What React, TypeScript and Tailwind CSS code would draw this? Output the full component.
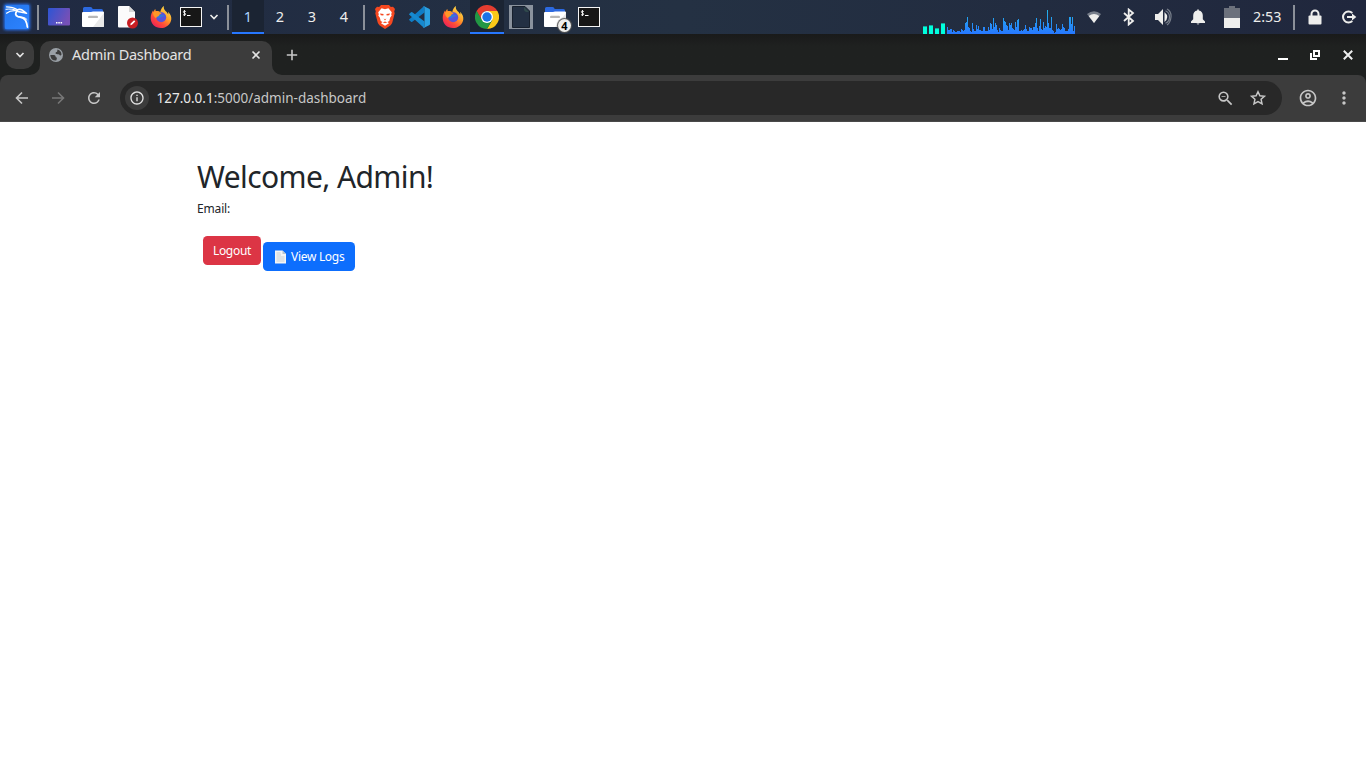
import type { ReactNode } from 'react';
import { MdInfoOutline, MdMoreVert, MdOutlineAccountCircle, MdRefresh, MdZoomOut } from 'react-icons/md';

const traffic = [
  7, 4, 4, 5, 5, 2, 4, 3, 2, 2, 3, 3, 3, 2, 5, 4, 3, 4, 11, 12, 17, 7, 6, 3, 2, 11, 5, 3, 3, 9, 5, 8,
  4, 4, 3, 3, 7, 7, 3, 3, 3, 7, 4, 11, 10, 5, 16, 7, 11, 9, 4, 2, 6, 4, 3, 3, 16, 13, 12, 9, 8, 4, 11,
  9, 11, 6, 5, 4, 12, 7, 14, 15, 3, 3, 4, 3, 4, 5, 9, 5, 3, 3, 7, 6, 6, 4, 7, 7, 11, 16, 6, 3, 8, 15, 5,
  4, 12, 6, 8, 7, 24, 11, 6, 6, 17, 4, 3, 1, 2, 10, 5, 6, 5, 4, 5, 10, 7, 6, 3, 3, 3, 5, 17, 17, 10, 17,
  3, 8,
];

function Slot({ children, active = false }: { children: ReactNode; active?: boolean }) {
  return (
    <div
      className={
        active
          ? 'flex h-[34px] w-[34px] items-center justify-center border-b-2 border-[#2777ff] bg-[#1b2433] pt-[2px]'
          : 'flex h-[34px] w-[34px] items-center justify-center'
      }
    >
      {children}
    </div>
  );
}

function Separator() {
  return <div className="h-[25px] w-[2px] bg-[#8b9099]" />;
}

function KaliIcon() {
  return (
    <svg width="34" height="34" viewBox="0 0 34 34">
      <defs>
        <linearGradient id="kali" x1="0" y1="0" x2="1" y2="1">
          <stop offset="0" stopColor="#2376ed" />
          <stop offset="1" stopColor="#2d83ff" />
        </linearGradient>
        <filter id="glow" x="-30%" y="-30%" width="160%" height="160%">
          <feGaussianBlur stdDeviation="1.600" />
        </filter>
      </defs>
      <rect x="4" y="4" width="26" height="26" rx="2" fill="#2777ff" filter="url(#glow)" />
      <rect x="5" y="5" width="24" height="24" rx="1" fill="url(#kali)" />
      <g fill="none" stroke="#fff" strokeLinecap="round" strokeLinejoin="round">
        <path d="M6.500 6.800c4.500 0 8 .9 11 3" strokeWidth="1.200" />
        <path d="M6 9.300c4-.6 8-.2 11.500 1.400" strokeWidth="1" />
        <path d="M6.500 13.200c2.600-2 6.500-3 10.500-2.400" strokeWidth="1.200" />
        <path d="M17 10c2.200-1 4.600-.7 6.300.8l3.200 2.500-3.200-.8c-1.600-.3-3-.9-4.700-.8" strokeWidth="1.600" />
        <path d="M17.200 11c-2.300 2-2.100 4.600.8 5.600 3.400.9 5.900 1.100 7.500 3.800 1 1.900 1.600 4 1.900 6.600" strokeWidth="1.800" />
        <path d="M20 17c3-.2 5.500.8 7 2.500" strokeWidth="1" />
      </g>
    </svg>
  );
}

function DesktopIcon() {
  return (
    <svg width="22" height="18" viewBox="0 0 22 18">
      <defs>
        <linearGradient id="desk" x1="0" y1="0" x2="1" y2="0.4">
          <stop offset="0" stopColor="#2c55d5" />
          <stop offset="1" stopColor="#7650b6" />
        </linearGradient>
      </defs>
      <rect width="22" height="17.500" rx="1" fill="url(#desk)" />
      <path d="M8 14h1.500v1.500H8zM10.300 14h1.500v1.500h-1.500zM12.600 14h1.500v1.500h-1.500z" fill="#fff" />
    </svg>
  );
}

function FolderIcon() {
  return (
    <svg width="22" height="20" viewBox="0 0 22 20">
      <path d="M1 1.500Q1 0 2.500 0H8.500q1 0 1.500.8l.7 1.100H19.500Q21 1.900 21 3.500V8H1z" fill="#2c69df" />
      <path d="M0 6q0-1 1-1h8l2-.6H21q1 0 1 1V19q0 1-1 1H1q-1 0-1-1z" fill="#fff" />
      <path d="M22 6V19q0 1-1 1H11z" fill="#e9e9e9" />
      <rect x="6" y="8.700" width="10" height="2.400" rx="1.200" fill="#b7b7b7" />
    </svg>
  );
}

function DocumentIcon() {
  return (
    <svg className="ml-[2px]" width="22" height="23" viewBox="0 0 22 23">
      <path d="M2 0h10l6 6v15.500H2q-1 0-1-1V1q0-1 1-1z" fill="#fbfbfb" />
      <path d="M12 0l6 6h-6z" fill="#d7d7d7" />
      <circle cx="15.500" cy="17" r="5.500" fill="#c81e23" />
      <path d="M13.300 19.200l.4-1.600 3.400-3.300 1.200 1.200-3.400 3.300z" fill="#fff" />
    </svg>
  );
}

function FirefoxIcon({ id }: { id: string }) {
  return (
    <svg width="22" height="22" viewBox="0 0 22 22">
      <defs>
        <linearGradient id={id} x1="0.850" y1="0.100" x2="0.200" y2="0.950">
          <stop offset="0" stopColor="#ffe14a" />
          <stop offset="0.400" stopColor="#ff9a28" />
          <stop offset="0.700" stopColor="#ff4b38" />
          <stop offset="1" stopColor="#ec2358" />
        </linearGradient>
      </defs>
      <path
        d="M14 0c-.7 2.300.2 3.600 1.700 5.200 1.400 1.200 2 2.200 2.500 3.400.2-1 .1-2-.2-2.900 2.300 2.200 3.600 4.700 3.300 7.500C20.800 18.300 16.400 22 11 22 5.100 22 .7 17.900.7 12c0-3 1.100-5.500 2.300-7.400l.5 1.500C4 4.600 4.600 3.700 5.300 3l.4 2.100c1.800-.5 3.300-.1 4.600.8C10.800 3.300 12 1.200 14 0z"
        fill={`url(#${id})`}
      />
      <circle cx="11.200" cy="11.200" r="5" fill="#5a52d8" />
      <path d="M6.100 11c.4-3 2.700-4.500 5.200-4.200-.3.800-.9 1.400-1.600 1.700 2.900.1 4.500.5 5.500 2-1.400-.7-2.500-.2-3.600.5-1.800 1.500-3.800 1.500-5.500 0z" fill="#3477dc" />
      <path d="M3 6.500c2.300-1.400 5.200-1.200 7.300.1L11.700 8c-1.400 0-2.300.4-2.400 1-.5 1.600-2.800 1.500-3.300 3.300-1.700-1-3-3-3-5.800z" fill="#ff9726" />
    </svg>
  );
}

function TerminalIcon() {
  return (
    <svg width="22" height="20" viewBox="0 0 22 20">
      <rect x=".5" y=".5" width="21" height="19" fill="#171717" stroke="#f5f5f5" />
      <g fill="none" stroke="#fff">
        <path d="M5.800 4.600C4.200 3.600 3 4.200 3.300 5.200c.3.900 2.300.8 2.400 1.900.1 1-1.600 1.300-2.700.5M4.500 3v6" strokeWidth=".9" />
        <path d="M7 8.500h3.500" />
      </g>
    </svg>
  );
}

function BraveIcon() {
  return (
    <svg width="20" height="24" viewBox="0 0 20 24">
      <path d="M6 0h8l1.800 2 2.200-.3L20 4l-.8 2.400.5 1.900-2.400 9.200q-.5 1.800-2 2.900L10 24l-5.300-3.600q-1.500-1.100-2-2.900L.3 8.300l.5-1.900L0 4l2-2.300 2.200.3z" fill="#f54820" />
      <path d="M10 4.200l3.400-.9 3.400 4-.6 2 .5 1.300-1.600 2.200-.8 3.200-1.800 1L14 18.300l-4 2.500-4-2.500L7.500 17l-1.800-1-.8-3.200-1.600-2.200.5-1.300-.6-2 3.400-4z" fill="#fff" />
      <path d="M5 8.600l3.600.5-.3 1.500-2.500-.4zM15 8.600l-3.600.5.3 1.500 2.500-.4zM8.600 13.600l1.400.6 1.400-.6L10 15.400zM7.700 17.400l2.300-1 2.300 1L10 18z" fill="#f54820" />
    </svg>
  );
}

function CodeIcon() {
  return (
    <svg width="22" height="22" viewBox="0 0 24 24">
      <path d="M1.200 15.400l2.100 1.900q.7.500 1.400 0L18 7V.5q-.9-.2-1.600.5L1.200 14.700q-.4.400 0 .7z" fill="#0f7dc6" />
      <path d="M1.200 8.600l2.100-1.900q.7-.5 1.400 0L18 17v6.500q-.9.200-1.600-.5L1.200 9.300q-.4-.4 0-.7z" fill="#1689cf" />
      <path d="M17.500.4L23 2.900q1 .5 1 1.500v15.200q0 1-1 1.500l-5.500 2.500q-.8.200-1.300-.5 1.800.5 1.800-1.400V2.300q0-1.800-1.800-1.400.5-.7 1.300-.5z" fill="#2a9fe0" />
    </svg>
  );
}

function ChromeIcon() {
  return (
    <svg width="24" height="24" viewBox="0 0 24 24">
      <path d="M12 6h10.400A12 12 0 0 1 12 24l5.200-9z" fill="#fbc918" />
      <path d="M1.600 6A12 12 0 0 0 12 24l5.200-9H6.800z" fill="#229744" />
      <path d="M1.600 6A12 12 0 0 1 22.400 6H12A6 6 0 0 0 6.800 9L6.800 15z" fill="#e43d30" />
      <path d="M1.600 6L6.800 15 8 18 3 18z" fill="#229744" />
      <circle cx="12" cy="12" r="6" fill="#fff" />
      <circle cx="12" cy="12" r="4.700" fill="#1a73e8" />
    </svg>
  );
}

function BlankIcon() {
  return (
    <svg width="24" height="24" viewBox="0 0 24 24">
      <rect width="24" height="24" fill="#8a929d" />
      <path d="M3.500 1.500H16l4.500 4.500v16.500h-17z" fill="#233043" stroke="#17202d" />
      <path d="M15 2l5 5h-2q-3 0-3-3z" fill="#304a4c" />
    </svg>
  );
}

function TrafficGraph() {
  return (
    <svg width="152" height="34" viewBox="0 0 152 34" shapeRendering="crispEdges">
      <defs>
        <linearGradient id="net" gradientUnits="userSpaceOnUse" x1="0" y1="10" x2="0" y2="34">
          <stop offset="0" stopColor="#22b6ea" />
          <stop offset="1" stopColor="#2777ff" />
        </linearGradient>
      </defs>
      <path d="M0 26h4v8H0zM6 25h4v9H6zM12 28h4v6h-4zM18 24h4v10h-4z" fill="#00ffdc" />
      <path d="M0 26h4v1H0zM6 25h4v1H6zM12 28h4v1h-4zM18 23h4v1h-4z" fill="#13a99c" />
      {traffic.map((h, i) => (
        <rect key={i} x={24 + i} y={34 - h} width="1" height={h} fill="url(#net)" />
      ))}
    </svg>
  );
}

function TaskBar() {
  return (
    <header className="flex h-[34px] w-full items-center bg-linear-to-r from-[#202a42] via-[#243143] to-[#20273d] text-[#eeeeec]">
      <div className="w-[37px]">
        <KaliIcon />
      </div>
      <Separator />
      <div className="ml-[3px] flex">
        <Slot><DesktopIcon /></Slot>
        <Slot><FolderIcon /></Slot>
        <Slot><DocumentIcon /></Slot>
        <Slot><FirefoxIcon id="foxMenu" /></Slot>
      </div>
      <div className="ml-[2px] w-[22px]"><TerminalIcon /></div>
      <svg className="ml-[7px]" width="10" height="10" viewBox="0 0 10 10">
        <path d="M1.500 3l3.500 3.500L8.500 3" fill="none" stroke="#eeeeec" strokeWidth="1.600" />
      </svg>
      <div className="ml-[8px] flex w-[5px]"><Separator /></div>
      <nav className="flex font-['Noto_Sans',sans-serif] text-[14.500px] leading-[32px]">
        <span className="h-[34px] w-[32px] border-b-2 border-[#2777ff] bg-[#1b2433] text-center text-[#aed5ff]">1</span>
        <span className="w-[32px] text-center">2</span>
        <span className="w-[32px] text-center">3</span>
        <span className="w-[32px] text-center">4</span>
      </nav>
      <div className="ml-[3px] flex w-[5px]"><Separator /></div>
      <div className="flex">
        <Slot><BraveIcon /></Slot>
        <Slot><CodeIcon /></Slot>
        <Slot><FirefoxIcon id="foxTask" /></Slot>
        <Slot active><ChromeIcon /></Slot>
        <Slot><BlankIcon /></Slot>
        <Slot>
          <span className="relative">
            <FolderIcon />
            <span className="absolute -right-[5px] -bottom-[5px] flex h-[13px] w-[13px] items-center justify-center rounded-full bg-[#eeeeec] font-['Noto_Sans',sans-serif] text-[11px] leading-none font-bold text-black shadow-[0_0_1px_1px_#555]">4</span>
          </span>
        </Slot>
        <Slot><TerminalIcon /></Slot>
      </div>
      <div className="ml-auto flex items-center">
        <TrafficGraph />
        <svg className="ml-[11px]" width="16" height="16" viewBox="0 0 16 16">
          <path d="M1 5Q8-.5 15 5l-7 9z" fill="#777e8a" />
          <path d="M2.700 7Q8 3 13.300 7L8 14z" fill="#eeeeec" />
        </svg>
        <svg className="ml-[18px]" width="18" height="18" viewBox="0 0 18 18">
          <path d="M4 5l9 8-4.300 3.500v-15L13 5l-9 8" fill="none" stroke="#eeeeec" strokeWidth="1.800" />
        </svg>
        <svg className="ml-[16px]" width="18" height="18" viewBox="0 0 18 18">
          <path d="M1 6h3l5-5v16l-5-5H1z" fill="#eeeeec" />
          <path d="M10.500 4q5.500 5 0 10z" fill="#eeeeec" />
          <path d="M11.500 2.700q4 1.800 4 6.300t-4 6.300M13 1Q17.500 3.500 17 9t-4 8" fill="none" stroke="#777e8a" strokeWidth="1.200" />
        </svg>
        <svg className="ml-[18px]" width="16" height="16" viewBox="0 0 16 16">
          <path d="M7.200 1.400V.5h1.600v.9q4 .7 4 5.100v3.700l2.200 2.300V14H1v-1.500l2.200-2.300V6.500q0-4.400 4-5.100zM6.500 14.500h3q-1.500 2-3 0z" fill="#eeeeec" />
        </svg>
        <svg className="ml-[18px]" width="16" height="22" viewBox="0 0 16 22" shapeRendering="crispEdges">
          <path d="M5 0h6v2h5v10H0V2h5z" fill="#6c717c" />
          <path d="M0 12h16v9q0 1-1 1H1q-1 0-1-1z" fill="#eeeeec" />
        </svg>
        <span className="ml-[13px] w-[40px] font-['Noto_Sans',sans-serif] text-[14.300px] leading-5 whitespace-nowrap">2:53</span>
        <Separator />
        <svg className="mr-[2px] ml-[13px]" width="14" height="16" viewBox="0 0 14 16">
          <path d="M3.500 7V5a3.500 3.500 0 0 1 7 0v2" fill="none" stroke="#eeeeec" strokeWidth="2" />
          <rect x=".5" y="6.500" width="13" height="9" rx="1" fill="#eeeeec" />
        </svg>
        <svg className="mr-[9px] ml-[17px]" width="16" height="16" viewBox="0 0 16 16">
          <path d="M11.300 4A5.500 5.500 0 1 0 11.300 12" fill="none" stroke="#eeeeec" strokeWidth="2" />
          <path d="M6 7h5V4.500L15.300 8 11 11.500V9H6z" fill="#eeeeec" />
        </svg>
      </div>
    </header>
  );
}

function TabStrip() {
  return (
    <div className="flex h-[41px] bg-linear-to-b from-[#191a1a] to-[#1f2120] to-30% font-['Noto_Sans',sans-serif]">
      <div className="flex w-[40px] pt-[7px] pl-[6px]">
        <button className="flex h-[28px] w-[28px] items-center justify-center rounded-[10px] bg-[#3c3c3c]">
          <svg width="10" height="8" viewBox="0 0 10 8">
            <path d="M1.500 2L5 5.500 8.500 2" fill="none" stroke="#e3e3e3" strokeWidth="1.700" />
          </svg>
        </button>
      </div>
      <div className="relative mt-[7px] flex h-[34px] w-[232px] items-center rounded-t-[10px] bg-[#3c3c3c] pr-[11px] pb-[6px] pl-[9px]">
        <svg className="absolute bottom-0 -left-[10px]" width="10" height="10" viewBox="0 0 10 10">
          <path d="M10 0A10 10 0 0 1 0 10H10z" fill="#3c3c3c" />
        </svg>
        <svg className="absolute -right-[10px] bottom-0" width="10" height="10" viewBox="0 0 10 10">
          <path d="M0 0A10 10 0 0 0 10 10H0z" fill="#3c3c3c" />
        </svg>
        <svg width="14" height="14" viewBox="0 0 14 14">
          <circle cx="7" cy="7" r="7" fill="#9aa0a6" />
          <path d="M8.500 1.600q4 1.200 4 5.200-.8 1.200-1.700.5-.7-1.300-2-1-1 .2-2.300-.8l.3-1.300 1.300-.5z" fill="#3c3c3c" />
          <path d="M1.300 7h3.900q1.600.4 1.600 2.300l1.200.4-.7 2.900q-5.800.3-6-5.600z" fill="#3c3c3c" />
        </svg>
        <span className="-mt-[2px] ml-[9px] text-[14.500px] leading-5 tracking-[-0.260px] text-[#e3e3e3]">Admin Dashboard</span>
        <svg className="ml-auto" width="10" height="10" viewBox="0 0 10 10">
          <path d="M1.500 1.500l7 7M8.500 1.500l-7 7" stroke="#e3e3e3" strokeWidth="1.600" />
        </svg>
      </div>
      <svg className="mt-[15px] ml-[14px]" width="12" height="12" viewBox="0 0 12 12">
        <path d="M6 .8v10.400M.8 6h10.400" stroke="#c7c7c7" strokeWidth="1.600" />
      </svg>
      <div className="mt-[16px] mr-[13px] ml-auto flex">
        <svg width="10" height="10" viewBox="0 0 10 10"><path d="M0 8h10v2H0z" fill="#fff" /></svg>
        <svg className="ml-[22px]" width="10" height="10" viewBox="0 0 10 10">
          <path d="M4 1h5v5H4zM1 3v6h6" fill="none" stroke="#fff" strokeWidth="2" />
        </svg>
        <svg className="ml-[23px]" width="10" height="10" viewBox="0 0 10 10"><path d="M.8.8l8.400 8.400M9.200.8L.8 9.200" stroke="#eee" strokeWidth="2" /></svg>
      </div>
    </div>
  );
}

function AddressBar() {
  return (
    <div className="bg-[#1f2120]">
      <div className="flex h-[47px] items-center rounded-t-[8px] border-b border-[#4a4a4a] bg-[#3c3c3c] pr-[14px] pl-[14px] font-['Noto_Sans',sans-serif] text-[#c7c7c7]">
        <svg width="16" height="16" viewBox="0 0 16 16">
          <path d="M14 8H3M8 2.500L2.500 8 8 13.500" fill="none" stroke="#c7c7c7" strokeWidth="1.600" />
        </svg>
        <svg className="ml-[20px]" width="16" height="16" viewBox="0 0 16 16">
          <path d="M2 8h11M8 2.500L13.500 8 8 13.500" fill="none" stroke="#777" strokeWidth="1.600" />
        </svg>
        <MdRefresh className="ml-[19px] h-[18px] w-[18px]" />
        <div className="ml-[17px] flex h-[34px] w-[1162px] items-center rounded-full bg-[#282828] pr-[15px] pl-[5px]">
          <div className="flex h-[24px] w-[24px] items-center justify-center rounded-full bg-[#3c3c3c]">
            <MdInfoOutline className="h-[16px] w-[16px] text-[#e3e3e3]" />
          </div>
          <span className="ml-[7.500px] text-[13.500px] leading-5"><span className="text-[#e8e8e8]">127.0.0.1</span>:5000/admin-dashboard</span>
          <MdZoomOut className="ml-auto h-[19px] w-[19px]" />
          <svg className="ml-[14px]" width="18" height="18" viewBox="0 0 18 18">
            <path d="M9 2.700l1.900 4.100 4.500.5-3.300 3 .9 4.500-4-2.300-4 2.300.9-4.500-3.300-3 4.500-.5z" fill="none" stroke="#c7c7c7" strokeWidth="1.500" />
          </svg>
        </div>
        <MdOutlineAccountCircle className="ml-[16px] h-[20px] w-[20px]" />
        <MdMoreVert className="-mr-[2px] ml-auto h-[20px] w-[20px]" />
      </div>
    </div>
  );
}

export default function App() {
  return (
    <div className="flex h-[768px] w-[1366px] flex-col overflow-hidden bg-white">
      <TaskBar />
      <TabStrip />
      <AddressBar />
      <main className="flex-1 pt-[37px] pl-[197px] font-['Noto_Sans',sans-serif] text-[#212529]">
        <h1 className="text-[30px] leading-[36px] tracking-[-0.600px]">Welcome, Admin!</h1>
        <p className="mt-[5px] text-[12px] leading-[18px] tracking-[-0.150px]">Email:</p>
        <div className="mt-[18px] ml-[6px] flex items-start gap-[2px] text-[12px] leading-[18px] text-white">
          <button className="h-[29px] w-[58px] rounded-[4.500px] bg-[#dc3545] tracking-[-0.300px]">Logout</button>
          <button className="mt-[6px] flex h-[29px] w-[92px] items-center rounded-[4.500px] bg-[#0d6efd] pl-[11px] tracking-[-0.300px]">
            <svg className="mr-[4px]" width="13" height="14" viewBox="0 0 13 14">
              <path d="M1 .5h7.500L12 4v9.500H1z" fill="#f5f5f5" />
              <path d="M8.500.5V4H12z" fill="#b8c4cc" />
              <path d="M2.500 3h4M2.500 5h4.500M2.500 7h8M2.500 9h8M2.500 11h8" stroke="#b9c1c5" strokeWidth=".7" />
            </svg>
            View Logs
          </button>
        </div>
      </main>
    </div>
  );
}
